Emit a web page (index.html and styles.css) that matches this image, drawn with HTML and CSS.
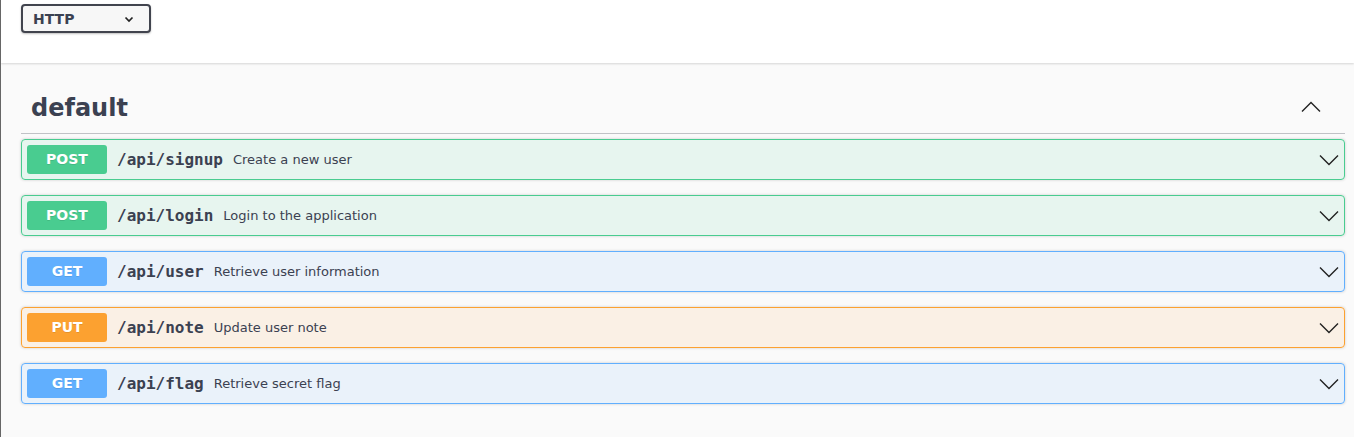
FILE: index.html
```html
<!DOCTYPE html>
<html>
<head>
<meta charset="utf-8">
<link rel="stylesheet" href="styles.css">
</head>
<body>
<div class="scheme">
  <div class="select">
    <span>HTTP</span>
    <svg class="sel-arrow" width="12" height="12" viewBox="0 0 12 12"><path d="M2.5 4.5 L6 8 L9.5 4.5" fill="none" stroke="#222" stroke-width="1.7"/></svg>
  </div>
</div>
<div class="wrapper">
  <h3 class="tag">
    <span class="tag-name">default</span>
    <svg class="arrow up" width="20" height="20" viewBox="0 0 20 20"><path d="M1 14.5 L10 5.5 L19 14.5" fill="none" stroke="#222" stroke-width="1.4"/></svg>
  </h3>
  <div class="op post">
    <span class="method">POST</span>
    <span class="path">/api/signup</span>
    <span class="desc">Create a new user</span>
    <svg class="arrow" width="20" height="20" viewBox="0 0 20 20"><path d="M1 5.5 L10 14.5 L19 5.5" fill="none" stroke="#222" stroke-width="1.4"/></svg>
  </div>
  <div class="op post">
    <span class="method">POST</span>
    <span class="path">/api/login</span>
    <span class="desc">Login to the application</span>
    <svg class="arrow" width="20" height="20" viewBox="0 0 20 20"><path d="M1 5.5 L10 14.5 L19 5.5" fill="none" stroke="#222" stroke-width="1.4"/></svg>
  </div>
  <div class="op get">
    <span class="method">GET</span>
    <span class="path">/api/user</span>
    <span class="desc">Retrieve user information</span>
    <svg class="arrow" width="20" height="20" viewBox="0 0 20 20"><path d="M1 5.5 L10 14.5 L19 5.5" fill="none" stroke="#222" stroke-width="1.4"/></svg>
  </div>
  <div class="op put">
    <span class="method">PUT</span>
    <span class="path">/api/note</span>
    <span class="desc">Update user note</span>
    <svg class="arrow" width="20" height="20" viewBox="0 0 20 20"><path d="M1 5.5 L10 14.5 L19 5.5" fill="none" stroke="#222" stroke-width="1.4"/></svg>
  </div>
  <div class="op get">
    <span class="method">GET</span>
    <span class="path">/api/flag</span>
    <span class="desc">Retrieve secret flag</span>
    <svg class="arrow" width="20" height="20" viewBox="0 0 20 20"><path d="M1 5.5 L10 14.5 L19 5.5" fill="none" stroke="#222" stroke-width="1.4"/></svg>
  </div>
</div>
</body>
</html>
```
FILE: styles.css
```css
html, body {
  margin: 0;
  padding: 0;
}
body {
  background: #fafafa;
  border-left: 1px solid #666;
  min-height: 437px;
  box-sizing: border-box;
  font-family: "DejaVu Sans", sans-serif;
  color: #3b4151;
}
.scheme {
  background: #fff;
  height: 63px;
  box-sizing: border-box;
  padding: 4px 0 0 20px;
  box-shadow: 0 1px 2px 0 rgba(0, 0, 0, 0.15);
}
.select {
  width: 130px;
  height: 29px;
  box-sizing: border-box;
  border: 2px solid #41444e;
  border-radius: 4px;
  background: #f7f7f7;
  box-shadow: 0 1px 2px 0 rgba(0, 0, 0, 0.25);
  display: flex;
  align-items: center;
  justify-content: space-between;
  padding: 0 14px 0 10px;
  font-size: 14px;
  font-weight: 700;
  color: #3b4151;
}
.sel-arrow {
  display: block;
}
.wrapper {
  padding: 22px 9px 0 20px;
}
.tag {
  margin: 0 0 5px;
  padding: 9px 24px 11px 10px;
  display: flex;
  align-items: center;
  justify-content: space-between;
  border-bottom: 1px solid rgba(59, 65, 81, 0.3);
  font-size: 24px;
  font-weight: 700;
  color: #3b4151;
  line-height: 28px;
}
.arrow {
  display: block;
  flex: none;
}
.arrow.up {
  margin-bottom: 3px;
}
.op {
  display: flex;
  align-items: center;
  padding: 5px;
  margin-bottom: 15px;
  border: 1px solid;
  border-radius: 4px;
  box-shadow: 0 0 3px rgba(0, 0, 0, 0.19);
}
.method {
  min-width: 80px;
  box-sizing: border-box;
  padding: 6px 0;
  text-align: center;
  border-radius: 3px;
  color: #fff;
  font-size: 14px;
  font-weight: 700;
  line-height: 17px;
  text-shadow: 0 1px 0 rgba(0, 0, 0, 0.1);
}
.path {
  padding: 0 10px;
  font-family: "DejaVu Sans Mono", monospace;
  font-size: 16px;
  font-weight: 700;
  color: #3b4151;
}
.desc {
  flex: 1;
  font-size: 13px;
  color: #3b4151;
}
.post {
  background: rgba(73, 204, 144, 0.1);
  border-color: #49cc90;
}
.post .method {
  background: #49cc90;
}
.get {
  background: rgba(97, 175, 254, 0.1);
  border-color: #61affe;
}
.get .method {
  background: #61affe;
}
.put {
  background: rgba(252, 161, 48, 0.1);
  border-color: #fca130;
}
.put .method {
  background: #fca130;
}
```
